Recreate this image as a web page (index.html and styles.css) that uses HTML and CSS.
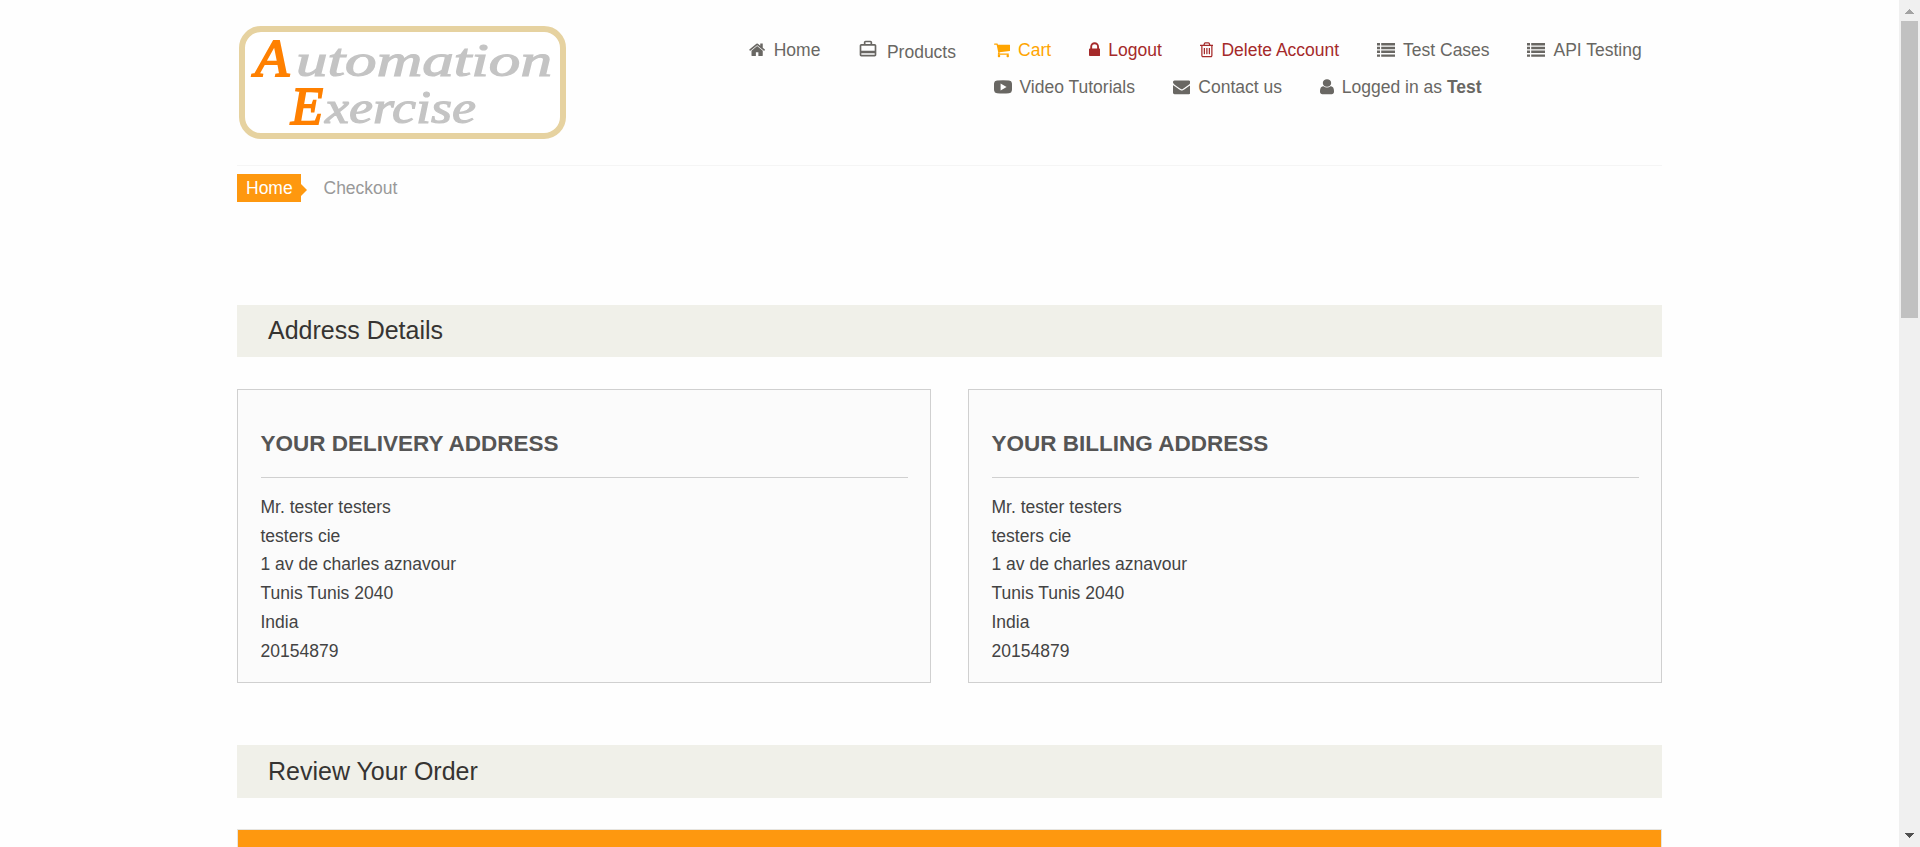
FILE: index.html
```html
<!DOCTYPE html>
<html lang="en">
<head>
<meta charset="utf-8">
<title>Automation Exercise - Checkout</title>
<link rel="stylesheet" href="styles.css">
</head>
<body>
<svg class="defs" width="0" height="0" aria-hidden="true">
  <symbol id="list" viewBox="0 0 18 18">
    <path d="M0 2h3v2.4H0zM4.200 2H18v2.400H4.200zM0 5.800h3v2.400H0zM4.200 5.800H18v2.400H4.200zM0 9.600h3V12H0zM4.200 9.600H18V12H4.200zM0 13.400h3v2.400H0zM4.200 13.400H18v2.400H4.200z"/>
  </symbol>
</svg>
<div class="page">
  <main class="viewport">
    <div class="container">
      <header class="header">
        <svg class="logo" width="327" height="113" viewBox="0 0 327 113" role="img" aria-label="Automation Exercise">
          <rect class="logo-frame" x="3" y="3" width="321" height="107" rx="19"/>
          <g class="logo-text">
            <text class="cap" x="16" y="50" font-size="53" textLength="34" lengthAdjust="spacingAndGlyphs">A</text>
            <text x="57" y="50" font-size="47" textLength="256" lengthAdjust="spacingAndGlyphs">utomation</text>
            <text class="cap" x="52" y="98" font-size="53" textLength="32" lengthAdjust="spacingAndGlyphs">E</text>
            <text x="86" y="97" font-size="47" textLength="151" lengthAdjust="spacingAndGlyphs">xercise</text>
          </g>
        </svg>
        <nav class="nav">
          <a class="item home"><svg width="16.25" height="17.5" viewBox="64 0 1664 1792"><path d="M1472 992v480q0 26-19 45t-45 19h-384v-384h-256v384h-384q-26 0-45-19t-19-45v-480q0-1 .5-3t.5-3l575-474 575 474q1 2 1 6zm223-69l-62 74q-8 9-21 11h-3q-13 0-21-7l-692-577-692 577q-12 8-24 7-13-2-21-11l-62-74q-8-10-7-23.500t11-21.500l719-599q32-26 76-26t76 26l244 204v-195q0-14 9-23t23-9h192q14 0 23 9t9 23v408l219 182q10 8 11 21.500t-7 23.500z"/></svg>Home</a>
          <a class="item products"><svg width="20" height="20" viewBox="0 0 24 24"><path d="M20 6h-3V4c0-1.110-.890-2-2-2H9c-1.110 0-2 .890-2 2v2H4c-1.110 0-2 .890-2 2v11c0 1.110.890 2 2 2h16c1.110 0 2-.890 2-2V8c0-1.110-.890-2-2-2zM9 4h6v2H9V4zm11 15H4v-2h16v2zm0-5H4V8h16v6z"/></svg><span>Products</span></a>
          <div class="nav-rows">
            <div class="nav-row">
              <a class="item cart"><svg width="16.25" height="17.5" viewBox="64 0 1664 1792"><path d="M704 1536q0 52-38 90t-90 38-90-38-38-90 38-90 90-38 90 38 38 90zm896 0q0 52-38 90t-90 38-90-38-38-90 38-90 90-38 90 38 38 90zm128-1088v512q0 24-16.500 42.500t-40.500 21.500l-1044 122q13 60 13 70 0 16-24 64h920q26 0 45 19t19 45-19 45-45 19h-1024q-26 0-45-19t-19-45q0-11 8-31.500t16-36 21.500-40 15.500-29.500l-177-823h-204q-26 0-45-19t-19-45 19-45 45-19h256q16 0 28.500 6.500t19.500 15.500 13 24.500 8 26 5.500 29.500 4.500 26h1201q26 0 45 19t19 45z"/></svg>Cart</a>
              <a class="item danger"><svg width="11.25" height="17.5" viewBox="320 0 1152 1792"><path d="M640 768h512v-192q0-106-75-181t-181-75-181 75-75 181v192zm832 96v576q0 40-28 68t-68 28h-960q-40 0-68-28t-28-68v-576q0-40 28-68t68-28h32v-192q0-184 132-316t316-132 316 132 132 316v192h32q40 0 68 28t28 68z"/></svg>Logout</a>
              <a class="item danger"><svg width="13.75" height="17.5" viewBox="192 0 1408 1792"><path d="M704 736v576q0 14-9 23t-23 9h-64q-14 0-23-9t-9-23v-576q0-14 9-23t23-9h64q14 0 23 9t9 23zm256 0v576q0 14-9 23t-23 9h-64q-14 0-23-9t-9-23v-576q0-14 9-23t23-9h64q14 0 23 9t9 23zm256 0v576q0 14-9 23t-23 9h-64q-14 0-23-9t-9-23v-576q0-14 9-23t23-9h64q14 0 23 9t9 23zm128 724v-948h-896v948q0 22 7 40.500t14.500 27 10.500 8.500h832q3 0 10.500-8.500t14.500-27 7-40.500zm-672-1076h448l-48-117q-7-9-17-11h-317q-10 2-17 11zm928 32v64q0 14-9 23t-23 9h-96v948q0 83-47 143.500t-113 60.500h-832q-66 0-113-58.500t-47-141.500v-952h-96q-14 0-23-9t-9-23v-64q0-14 9-23t23-9h309l70-167q15-37 54-63t79-26h320q40 0 79 26t54 63l70 167h309q14 0 23 9t9 23z"/></svg>Delete Account</a>
              <a class="item"><svg width="18" height="18"><use href="#list"/></svg>Test Cases</a>
              <a class="item"><svg width="18" height="18"><use href="#list"/></svg>API Testing</a>
            </div>
            <div class="nav-row">
              <a class="item video"><svg width="18" height="18" viewBox="0 0 18 18"><path fill-rule="evenodd" d="M3 2.500Q9 1.900 15 2.500Q17.700 2.700 17.900 5Q18.200 9 17.900 12.500Q17.700 15 15 15.300Q9 15.900 3 15.300Q.3 15 .1 12.500Q-.2 9 .1 5Q.3 2.700 3 2.500zM6.600 5.400v7.100l6-3.550z"/></svg>Video Tutorials</a>
              <a class="item"><svg width="17.5" height="17.5" viewBox="0 0 1792 1792"><path d="M1792 710v794q0 66-47 113t-113 47h-1472q-66 0-113-47t-47-113v-794q44 49 101 87 362 246 497 345 57 42 92.500 65.500t94.500 48 110 24.500h2q51 0 110-24.500t94.500-48 92.500-65.500q170-123 498-345 57-39 100-87zm0-294q0 79-49 151t-122 123q-376 261-468 325-10 7-42.500 31t-54 38.500-52 32.500-57.500 27-50 9h-2q-23 0-50-9t-57.500-27-52-32.500-54-38.500-42.500-31q-91-64-262-182.500t-205-142.500q-62-42-117-115.500t-55-136.500q0-78 41.500-130t118.500-52h1472q65 0 112.500 47t47.500 113z"/></svg>Contact us</a>
              <a class="item"><svg width="14" height="17.5" viewBox="256 0 1280 1792" preserveAspectRatio="none"><path d="M1536 1399q0 109-62.500 187t-150.500 78h-854q-88 0-150.500-78t-62.500-187q0-85 8.500-160.500t31.500-152 58.500-131 94-89 134.500-34.500q131 128 313 128t313-128q76 0 134.500 34.500t94 89 58.500 131 31.500 152 8.500 160.500zm-256-887q0 159-112.500 271.500t-271.500 112.500-271.500-112.500-112.500-271.500 112.500-271.500 271.500-112.500 271.500 112.500 112.500 271.500z"/></svg><span>Logged in as <b>Test</b></span></a>
            </div>
          </div>
        </nav>
      </header>

      <div class="breadcrumb"><a class="crumb">Home</a><span>Checkout</span></div>

      <h2 class="heading">Address Details</h2>
      <section class="addresses">
        <div class="card">
          <h3>YOUR DELIVERY ADDRESS</h3>
          <ul>
            <li>Mr. tester testers</li>
            <li>testers cie</li>
            <li>1 av de charles aznavour</li>
            <li>Tunis Tunis 2040</li>
            <li>India</li>
            <li>20154879</li>
          </ul>
        </div>
        <div class="card">
          <h3>YOUR BILLING ADDRESS</h3>
          <ul>
            <li>Mr. tester testers</li>
            <li>testers cie</li>
            <li>1 av de charles aznavour</li>
            <li>Tunis Tunis 2040</li>
            <li>India</li>
            <li>20154879</li>
          </ul>
        </div>
      </section>

      <h2 class="heading review">Review Your Order</h2>
      <div class="order-table"><div class="order-head"></div></div>
    </div>
  </main>
  <aside class="scrollbar">
    <svg width="21" height="21" viewBox="0 0 21 21"><path fill="#a3a3a3" d="M10 9h1v1h1v1h1v1h1v1h1v1H6v-1h1v-1h1v-1h1v-1h1z"/></svg>
    <div class="thumb"></div>
    <svg width="21" height="21" viewBox="0 0 21 21"><path fill="#505050" d="M6 7h9v1h-1v1h-1v1h-1v1h-1v1h-1v-1H9v-1H8V9H7V8H6z"/></svg>
  </aside>
</div>
</body>
</html>
```
FILE: styles.css
```css
* { box-sizing: border-box; }
body {
  margin: 0;
  overflow: hidden;
  background: #fefefe;
  color: #434343;
  font: 17.5px/25px "Liberation Sans", Arial, sans-serif;
}
h2, h3, ul { margin: 0; padding: 0; font-weight: 400; }
ul { list-style: none; }
.defs { display: block; height: 0; }
.page { display: flex; height: 847px; }
.viewport { flex: 1; overflow: hidden; }
.container { width: 1425px; margin-left: 237px; }

/* Header */
.header {
  display: flex;
  align-items: flex-start;
  height: 166px;
  padding: 26px 0 0 2px;
  border-bottom: 1px solid #f5f5f5;
}
.logo { display: block; flex: none; }
.logo-frame { fill: #fff; stroke: #e6d2a0; stroke-width: 6; }
.logo-text {
  fill: #c4c4c4;
  stroke: #c4c4c4;
  stroke-width: 1.2;
  font-family: "Liberation Serif", serif;
  font-style: italic;
}
.logo-text .cap { fill: #ff8000; stroke: #ff8000; stroke-width: 2; }
.nav { display: flex; margin: 12px 0 0 183.300px; color: #696763; }
.nav-row { display: flex; gap: 37.700px; height: 37px; }
.item { display: flex; height: 25px; align-items: center; gap: 8.200px; white-space: nowrap; }
.item svg { flex: none; fill: currentColor; margin-top: -1px; }
.home { margin-right: 37.500px; }
.products { margin-right: 37.700px; gap: 9px; }
.products svg { margin-top: -4px; }
.products span { padding-top: 4px; }
.cart { color: #ffa500; }
.danger { color: #a52a2a; }
.video { gap: 7.800px; }

/* Breadcrumb */
.breadcrumb { display: flex; align-items: center; gap: 22.500px; height: 28px; margin: 8px 0 103px; color: #999; }
.crumb { position: relative; width: 64px; height: 28px; padding-left: 9px; line-height: 28px; background: #fe980f; color: #fff; }
.crumb::after {
  content: "";
  position: absolute;
  left: 64px;
  top: 10px;
  border: 6px solid transparent;
  border-left-color: #fe980f;
  border-right: 0;
}

/* Sections */
.heading { height: 52px; padding-left: 31px; background: #f0f0e9; color: #363432; font-size: 25px; line-height: 51px; }
.review { height: 53px; margin-top: 62px; line-height: 53px; }
.addresses { display: grid; grid-template-columns: 1fr 1fr; gap: 37px; margin-top: 32px; }
.card { height: 294px; padding: 40px 22.500px 0; border: 1px solid #d0d0d0; background: #fbfbfb; }
.card h3 { height: 48px; border-bottom: 1px solid #d0d0d0; color: #555; font-size: 22.500px; font-weight: 700; line-height: 27px; }
.card ul { padding-top: 14.800px; }
.card li { height: 28.750px; line-height: 28.750px; }
.order-table { height: 60px; margin-top: 31px; padding: 1px; background: #e6e4df; }
.order-head { height: 59px; background: #fe980f; }

/* Page scrollbar */
.scrollbar { display: flex; flex-direction: column; width: 21px; height: 847px; background: #f0f0f0; }
.scrollbar svg { display: block; flex: none; }
.thumb { width: 17px; height: 297px; margin: 0 2px auto; background: #c1c1c1; }
```
